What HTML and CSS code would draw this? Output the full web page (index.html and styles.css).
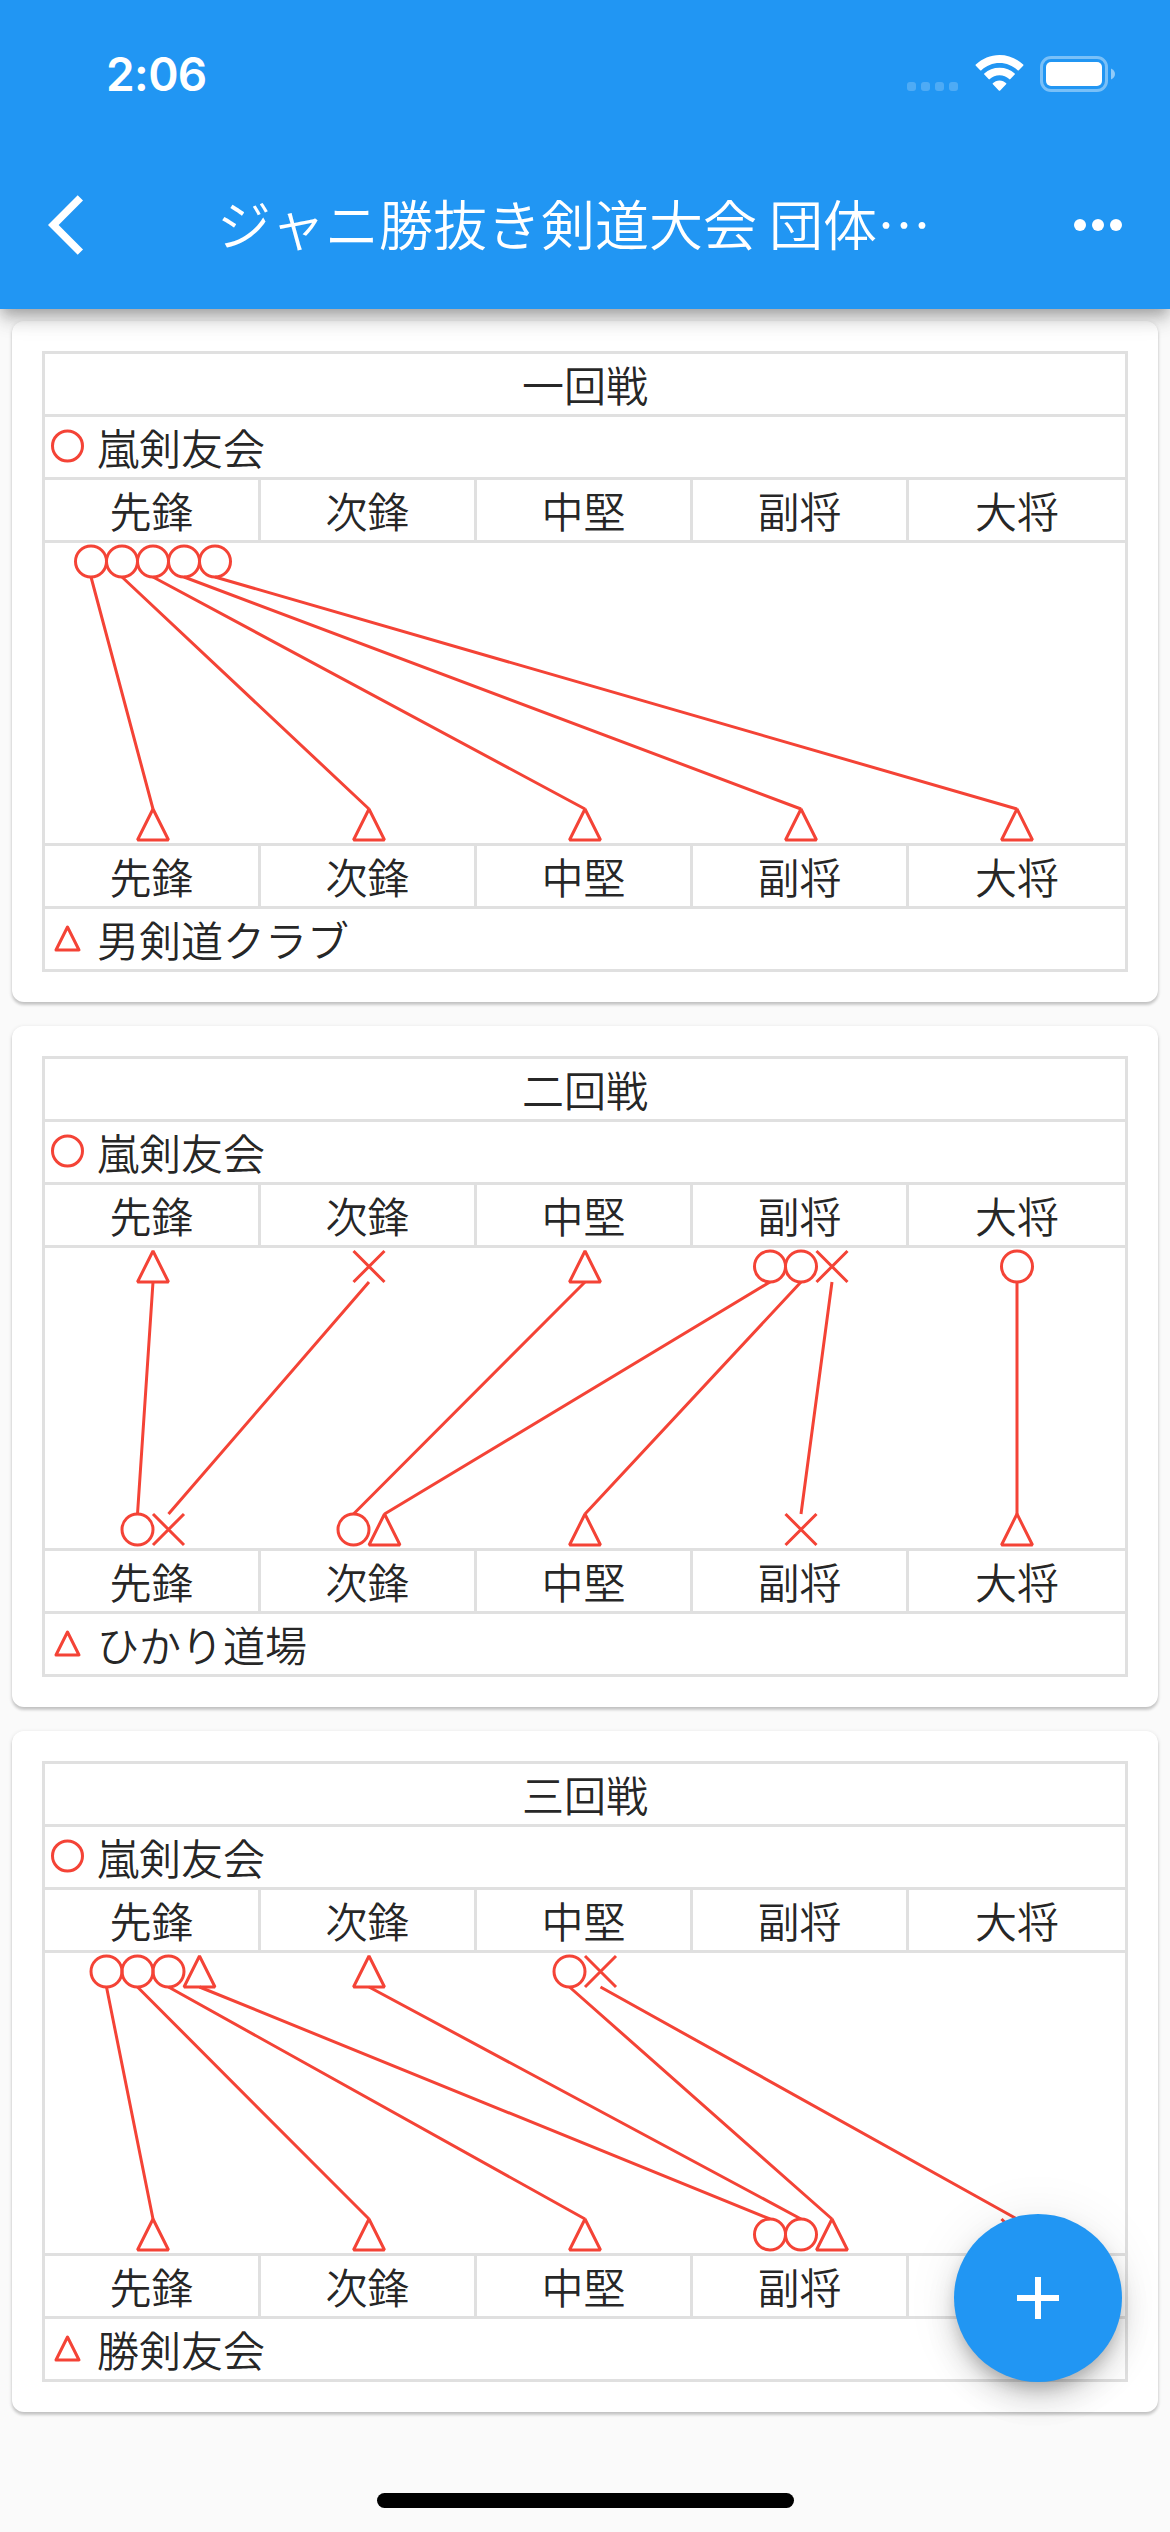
FILE: index.html
```html
<!DOCTYPE html>
<html lang="ja">
<head>
<meta charset="utf-8">
<title>ジャニ勝抜き剣道大会</title>
<link rel="stylesheet" href="styles.css">
</head>
<body>
<svg class="defs" width="0" height="0" aria-hidden="true">
  <symbol id="o" overflow="visible"><circle cx="0" cy="15.5" r="15.5"/></symbol>
  <symbol id="t" overflow="visible"><path d="M0 0L15.5 31H-15.5Z"/></symbol>
  <symbol id="x" overflow="visible"><path d="M-15.5 0L15.5 31M15.5 0L-15.5 31"/></symbol>
</svg>
<div class="screen">
  <header class="top">
    <div class="status">
      <span class="time">2:06</span>
      <div class="indicators">
        <svg class="signal" width="51" height="9" viewBox="0 0 51 9"><rect width="9" height="9" rx="3"/><rect x="14" width="9" height="9" rx="3"/><rect x="28" width="9" height="9" rx="3"/><rect x="42" width="9" height="9" rx="3"/></svg>
        <svg class="wifi" width="49" height="36" viewBox="0 0 49 36"><path d="M24.5 8C31.400 8 37.700 10.700 42.600 15.200Q43.200 15.800 43.800 15.200L48.200 10.700Q48.800 10.100 48.200 9.500C41.800 3.600 33.500 0 24.500 0S7.200 3.600.8 9.500Q.2 10.100.8 10.700L5.200 15.200Q5.800 15.800 6.400 15.200C11.300 10.700 17.600 8 24.500 8Z"/><path d="M24.500 20.300C28.200 20.300 31.600 21.700 34.200 24.100Q34.800 24.700 35.400 24.100L39.700 19.600Q40.300 19 39.700 18.400C35.700 14.700 30.400 12.700 24.500 12.700S13.300 14.700 9.300 18.400Q8.700 19 9.300 19.600L13.600 24.100Q14.200 24.700 14.800 24.100C17.400 21.700 20.800 20.300 24.500 20.300Z"/><path d="M31.200 28.300Q31.600 28.800 31.100 29.300L25.200 35.500Q24.500 36.100 23.800 35.500L17.900 29.300Q17.400 28.800 17.800 28.300C19.500 26.600 21.900 25.500 24.500 25.500S29.500 26.600 31.200 28.300Z"/></svg>
        <svg class="battery" width="75" height="36" viewBox="0 0 75 36"><rect class="shell" x="1.500" y="1.500" width="65" height="33" rx="9.500"/><rect x="6" y="6" width="56" height="24" rx="5"/><path class="nub" d="M71 12.500C73.500 13.500 75 15.700 75 18S73.500 22.500 71 23.500Z"/></svg>
      </div>
    </div>
    <div class="bar">
      <svg class="back" width="72" height="72" viewBox="0 0 24 24"><path d="M11.670 3.870L9.900 2.100 0 12l9.900 9.900 1.770-1.770L3.540 12z"/></svg>
      <h1 class="title">ジャニ勝抜き剣道大会 団体…</h1>
      <svg class="more" width="72" height="72" viewBox="0 0 24 24"><circle cx="6" cy="12" r="2"/><circle cx="12" cy="12" r="2"/><circle cx="18" cy="12" r="2"/></svg>
    </div>
  </header>

  <main class="list">
    <section class="card">
      <div class="board">
        <div class="row round">一回戦</div>
        <div class="row team"><svg class="mark" width="45" height="60"><circle cx="22.500" cy="29" r="15"/></svg>嵐剣友会</div>
        <div class="row seats"><span>先鋒</span><span>次鋒</span><span>中堅</span><span>副将</span><span>大将</span></div>
        <svg class="bouts" width="1080" height="300" viewBox="0 0 1080 300">
          <use href="#o" x="46" y="3"/><use href="#o" x="77" y="3"/><use href="#o" x="108" y="3"/><use href="#o" x="139" y="3"/><use href="#o" x="170" y="3"/>
          <use href="#t" x="108" y="266"/><use href="#t" x="324" y="266"/><use href="#t" x="540" y="266"/><use href="#t" x="756" y="266"/><use href="#t" x="972" y="266"/>
          <path d="M46 34L108 266M77 34L324 266M108 34L540 266M139 34L756 266M170 34L972 266"/>
        </svg>
        <div class="row seats"><span>先鋒</span><span>次鋒</span><span>中堅</span><span>副将</span><span>大将</span></div>
        <div class="row team"><svg class="mark" width="45" height="60"><path d="M22.500 18L34 41H11Z"/></svg>男剣道クラブ</div>
      </div>
    </section>

    <section class="card">
      <div class="board">
        <div class="row round">二回戦</div>
        <div class="row team"><svg class="mark" width="45" height="60"><circle cx="22.500" cy="29" r="15"/></svg>嵐剣友会</div>
        <div class="row seats"><span>先鋒</span><span>次鋒</span><span>中堅</span><span>副将</span><span>大将</span></div>
        <svg class="bouts" width="1080" height="300" viewBox="0 0 1080 300">
          <use href="#t" x="108" y="3"/><use href="#x" x="324" y="3"/><use href="#t" x="540" y="3"/><use href="#o" x="725" y="3"/><use href="#o" x="756" y="3"/><use href="#x" x="787" y="3"/><use href="#o" x="972" y="3"/>
          <use href="#o" x="92.500" y="266"/><use href="#x" x="123.500" y="266"/><use href="#o" x="308.500" y="266"/><use href="#t" x="339.500" y="266"/><use href="#t" x="540" y="266"/><use href="#x" x="756" y="266"/><use href="#t" x="972" y="266"/>
          <path d="M108 34L92.500 266M324 34L123.500 266M540 34L308.500 266M725 34L339.500 266M756 34L540 266M787 34L756 266M972 34V266"/>
        </svg>
        <div class="row seats"><span>先鋒</span><span>次鋒</span><span>中堅</span><span>副将</span><span>大将</span></div>
        <div class="row team"><svg class="mark" width="45" height="60"><path d="M22.500 18L34 41H11Z"/></svg>ひかり道場</div>
      </div>
    </section>

    <section class="card">
      <div class="board">
        <div class="row round">三回戦</div>
        <div class="row team"><svg class="mark" width="45" height="60"><circle cx="22.500" cy="29" r="15"/></svg>嵐剣友会</div>
        <div class="row seats"><span>先鋒</span><span>次鋒</span><span>中堅</span><span>副将</span><span>大将</span></div>
        <svg class="bouts" width="1080" height="300" viewBox="0 0 1080 300">
          <use href="#o" x="61.500" y="3"/><use href="#o" x="92.500" y="3"/><use href="#o" x="123.500" y="3"/><use href="#t" x="154.500" y="3"/><use href="#t" x="324" y="3"/><use href="#o" x="524.500" y="3"/><use href="#x" x="555.500" y="3"/>
          <use href="#t" x="108" y="266"/><use href="#t" x="324" y="266"/><use href="#t" x="540" y="266"/><use href="#o" x="725" y="266"/><use href="#o" x="756" y="266"/><use href="#t" x="787" y="266"/><use href="#x" x="972" y="266"/>
          <path d="M61.500 34L108 266M92.500 34L324 266M123.500 34L540 266M154.500 34L725 266M324 34L756 266M524.500 34L787 266M555.500 34L972 266"/>
        </svg>
        <div class="row seats"><span>先鋒</span><span>次鋒</span><span>中堅</span><span>副将</span><span>大将</span></div>
        <div class="row team"><svg class="mark" width="45" height="60"><path d="M22.500 18L34 41H11Z"/></svg>勝剣友会</div>
      </div>
    </section>
  </main>

  <button class="fab" aria-label="追加"><svg width="72" height="72" viewBox="0 0 24 24"><path d="M19 13h-6v6h-2v-6H5v-2h6V5h2v6h6v2z"/></svg></button>
  <div class="home"></div>
</div>
</body>
</html>
```
FILE: styles.css
```css
* { box-sizing: border-box; }

body {
  margin: 0;
  background: #fafafa;
  color: rgba(0, 0, 0, .87);
  font-family: "Noto Sans CJK JP", sans-serif;
  font-weight: 350;
  font-kerning: none;
}

svg { display: block; flex: none; }

.defs { position: absolute; }

.screen {
  position: relative;
  width: 1170px;
  height: 2532px;
  overflow: hidden;
}

/* Header */
.top {
  position: relative;
  z-index: 1;
  height: 309px;
  background: #2196f3;
  color: #fff;
  fill: #fff;
  box-shadow: 0 6px 12px -3px rgba(0, 0, 0, .2), 0 12px 15px rgba(0, 0, 0, .14), 0 3px 30px rgba(0, 0, 0, .12);
}

.status {
  display: flex;
  justify-content: space-between;
  height: 141px;
  padding: 0 55px 0 106px;
}

.time {
  padding-top: 47px;
  font: 600 46px/54px Inter, sans-serif;
  letter-spacing: -.6px;
}

.indicators {
  display: flex;
  align-items: flex-start;
  padding-top: 55px;
}

.signal { margin: 27px 17px 0 0; opacity: .2; }
.wifi { margin-right: 16px; }
.battery { margin-top: 1px; }
.shell { fill: none; stroke: #fff; stroke-width: 3; opacity: .4; }
.nub { opacity: .5; }

.bar {
  display: flex;
  align-items: center;
  height: 168px;
  padding: 0 36px 0 48px;
}

.title {
  flex: 1;
  margin: 0 0 5px 97px;
  font-size: 54px;
  font-weight: 350;
  line-height: 72px;
  white-space: nowrap;
}

/* Match cards */
.list {
  display: flex;
  flex-direction: column;
  gap: 24px;
  padding: 12px 12px 0;
}

.card {
  padding: 30px;
  border-radius: 12px;
  background: #fff;
  box-shadow: 0 3px 3px rgba(0, 0, 0, .16), 0 1px 4px rgba(0, 0, 0, .12);
}

.board {
  border: 3px solid #e0e0e0;
  font-size: 42px;
  line-height: 60px;
}

.row {
  display: flex;
  height: 63px;
  border-bottom: 3px solid #e0e0e0;
}

.row:last-child { height: 60px; border-bottom: 0; }

.round { justify-content: center; }

.mark { margin-right: 7px; }

.mark, .bouts {
  fill: none;
  stroke: #f44336;
  stroke-width: 3;
}

.mark { stroke-linejoin: round; }
.bouts { stroke-linejoin: bevel; }

.seats {
  display: grid;
  grid-template-columns: repeat(5, 1fr);
}

.seats span {
  border-right: 3px solid #e0e0e0;
  text-align: center;
}

.seats span:last-child { border-right: 0; }

.bouts + .seats { border-top: 3px solid #e0e0e0; height: 66px; }

/* Overlays */
.fab {
  position: absolute;
  z-index: 2;
  right: 48px;
  bottom: 150px;
  display: flex;
  align-items: center;
  justify-content: center;
  width: 168px;
  height: 168px;
  padding: 0;
  border: 0;
  border-radius: 50%;
  background: #2196f3;
  fill: #fff;
  box-shadow: 0 9px 15px -3px rgba(0, 0, 0, .2), 0 18px 30px rgba(0, 0, 0, .14), 0 3px 54px rgba(0, 0, 0, .08);
}

.home {
  position: absolute;
  z-index: 2;
  left: 377px;
  bottom: 24px;
  width: 417px;
  height: 15px;
  border-radius: 8px;
  background: #000;
}
```
